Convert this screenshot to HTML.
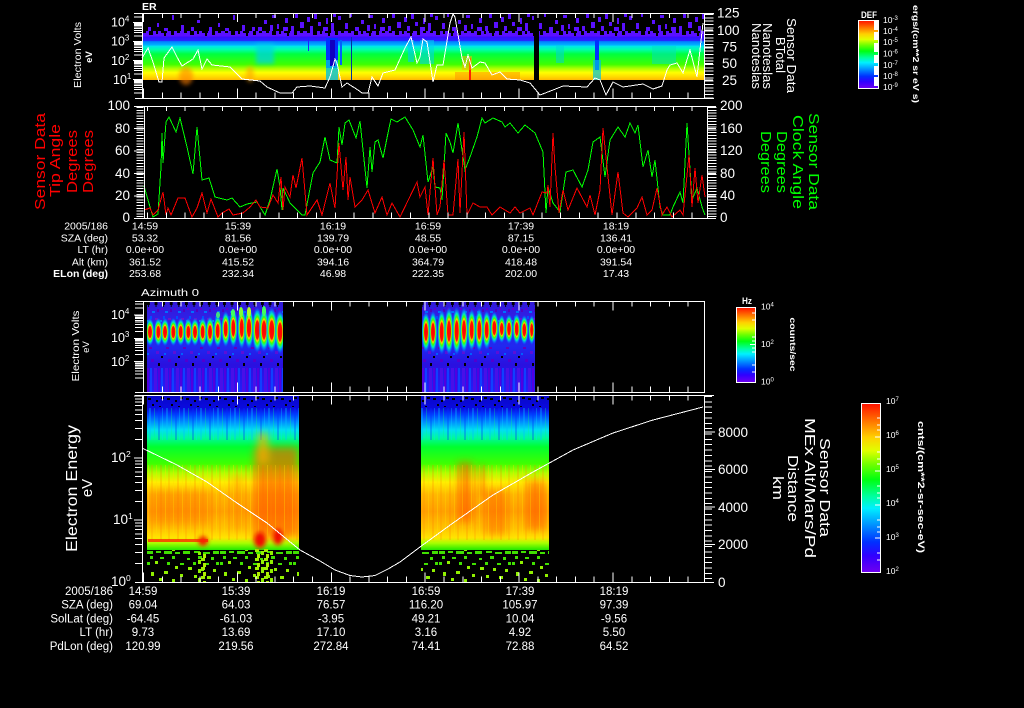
<!DOCTYPE html>
<html><head><meta charset="utf-8"><title>Sensor Data</title>
<style>
html,body{margin:0;padding:0;background:#000;width:1024px;height:708px;overflow:hidden}
svg{display:block}
text{fill:#fff;font-family:"Liberation Sans",sans-serif}
.t2 text{font-size:10.5px;text-anchor:middle}
.t2 text.l,.t4 text.l{text-anchor:end}
.t4 text{font-size:11.5px;text-anchor:middle}
.r text{font-size:13.5px;text-anchor:end}
.rr text{font-size:13.5px}
.red text{fill:#f00;font-size:15px;text-anchor:middle}
.grn text{fill:#0f0;font-size:15px;text-anchor:middle}
.wh text{font-size:15px;text-anchor:middle}
.c text{font-size:8.5px}
.tk{stroke:#fff;fill:none;stroke-width:1}
</style></head><body>
<svg width="1024" height="708" viewBox="0 0 1024 708" shape-rendering="crispEdges">
<defs>
<clipPath id="cp1"><rect x="130" y="13" width="20" height="86"/></clipPath>
<clipPath id="cp3"><rect x="130" y="301" width="20" height="92"/></clipPath>
<clipPath id="cp3b"><rect x="147" y="302" width="136" height="90"/><rect x="422" y="302" width="113" height="90"/></clipPath>
<clipPath id="cp4"><rect x="130" y="395" width="20" height="188"/></clipPath>
<clipPath id="cp4b"><rect x="147" y="396" width="152" height="154"/><rect x="421" y="396" width="128" height="154"/></clipPath>
<linearGradient id="g1" x1="0" y1="0" x2="0" y2="1">
<stop offset="0" stop-color="#3c08ff"/><stop offset=".09" stop-color="#2a20ff"/><stop offset=".11" stop-color="#0080ff"/><stop offset=".19" stop-color="#00b0ff"/><stop offset=".22" stop-color="#00e8e8"/><stop offset=".3" stop-color="#00ffa8"/><stop offset=".4" stop-color="#00ff40"/><stop offset=".64" stop-color="#40ff00"/><stop offset=".73" stop-color="#a8ff00"/><stop offset=".83" stop-color="#ffff00"/><stop offset=".93" stop-color="#ffd800"/><stop offset="1" stop-color="#ffb800"/>
</linearGradient>
<linearGradient id="g4" x1="0" y1="0" x2="0" y2="1">
<stop offset="0" stop-color="#0808c8"/><stop offset=".08" stop-color="#0a0ae0"/><stop offset=".12" stop-color="#0040ff"/><stop offset=".17" stop-color="#0090ff"/><stop offset=".22" stop-color="#00e0f0"/><stop offset=".27" stop-color="#00f8a0"/><stop offset=".33" stop-color="#00ff30"/><stop offset=".44" stop-color="#40ff00"/><stop offset=".5" stop-color="#b0ff00"/><stop offset=".56" stop-color="#ffee00"/><stop offset=".64" stop-color="#ffb800"/><stop offset=".75" stop-color="#ffa000"/><stop offset=".86" stop-color="#ffc400"/><stop offset=".92" stop-color="#ffe400"/><stop offset=".955" stop-color="#a8ff00"/><stop offset="1" stop-color="#20e800"/>
</linearGradient>
<linearGradient id="g3" x1="0" y1="0" x2="0" y2="1">
<stop offset="0" stop-color="#3018d8"/><stop offset=".2" stop-color="#3020e8"/><stop offset=".5" stop-color="#2028f0"/><stop offset=".7" stop-color="#2a10e0"/><stop offset="1" stop-color="#2020f8"/>
</linearGradient>
<linearGradient id="bar" x1="0" y1="0" x2="0" y2="1">
<stop offset="0" stop-color="#ff1000"/><stop offset=".1" stop-color="#ff7000"/><stop offset=".2" stop-color="#ffd000"/><stop offset=".28" stop-color="#e0ff00"/><stop offset=".36" stop-color="#70ff00"/><stop offset=".45" stop-color="#00ff10"/><stop offset=".55" stop-color="#00ffa0"/><stop offset=".62" stop-color="#00f0ff"/><stop offset=".72" stop-color="#0090ff"/><stop offset=".82" stop-color="#0030ff"/><stop offset=".9" stop-color="#3000ff"/><stop offset="1" stop-color="#7000f0"/>
</linearGradient>
<radialGradient id="pl">
<stop offset="0" stop-color="#ff0000"/><stop offset=".38" stop-color="#ff1000"/><stop offset=".47" stop-color="#ffd000"/><stop offset=".57" stop-color="#40ff00"/><stop offset=".7" stop-color="#00e8c0"/><stop offset=".85" stop-color="#0080ff" stop-opacity=".7"/><stop offset="1" stop-color="#2030ff" stop-opacity="0"/>
</radialGradient>
<filter id="b2" x="-50%" y="-50%" width="200%" height="200%"><feGaussianBlur stdDeviation="2"/></filter>
<filter id="b4" x="-50%" y="-50%" width="200%" height="200%"><feGaussianBlur stdDeviation="4"/></filter>
<pattern id="sp1" width="97" height="18" patternUnits="userSpaceOnUse" x="142" y="13">
<g fill="#5a10ff">
<rect x="2" y="3" width="3" height="4"/><rect x="9" y="10" width="3" height="6"/><rect x="14" y="1" width="2" height="3"/><rect x="19" y="14" width="4" height="4"/><rect x="25" y="7" width="3" height="4"/><rect x="31" y="12" width="3" height="6"/><rect x="33" y="2" width="4" height="3"/><rect x="38" y="11" width="2" height="5"/><rect x="44" y="14" width="5" height="4"/><rect x="46" y="5" width="3" height="5"/><rect x="52" y="13" width="3" height="5"/><rect x="56" y="0" width="3" height="5"/><rect x="61" y="9" width="4" height="6"/><rect x="68" y="4" width="3" height="5"/><rect x="71" y="13" width="3" height="5"/><rect x="75" y="1" width="3" height="5"/><rect x="79" y="9" width="3" height="4"/><rect x="84" y="14" width="5" height="4"/><rect x="87" y="5" width="2" height="6"/><rect x="92" y="10" width="3" height="8"/><rect x="94" y="1" width="3" height="3"/>
</g>
</pattern>
<pattern id="sp0" width="61" height="18" patternUnits="userSpaceOnUse" x="142" y="14">
<g fill="#5a10ff">
<rect x="6" y="13" width="3" height="5"/><rect x="15" y="9" width="2" height="4"/><rect x="22" y="14" width="4" height="4"/><rect x="30" y="1" width="2" height="5"/><rect x="39" y="11" width="3" height="7"/><rect x="49" y="13" width="3" height="5"/><rect x="55" y="6" width="3" height="3"/>
</g>
</pattern>
<pattern id="row1" width="41" height="6" patternUnits="userSpaceOnUse" x="142" y="31">
<rect width="41" height="6" fill="#5a10ff"/><rect x="1" y="0" width="3" height="2" fill="#000"/><rect x="7" y="0" width="4" height="4" fill="#000"/><rect x="14" y="0" width="2" height="3" fill="#000"/><rect x="19" y="0" width="6" height="2" fill="#000"/><rect x="22" y="2" width="2" height="3" fill="#000"/><rect x="29" y="0" width="3" height="4" fill="#000"/><rect x="35" y="0" width="3" height="2" fill="#000"/>
</pattern>
<pattern id="sp4" width="73" height="32" patternUnits="userSpaceOnUse" x="147" y="551">
<g fill="#40e000">
<rect x="0" y="0" width="6" height="3"/><rect x="9" y="0" width="5" height="2"/><rect x="17" y="0" width="8" height="3"/><rect x="28" y="1" width="5" height="2"/><rect x="36" y="0" width="7" height="3"/><rect x="47" y="0" width="6" height="2"/><rect x="56" y="1" width="7" height="2"/><rect x="66" y="0" width="6" height="3"/>
<rect x="3" y="5" width="3" height="3"/><rect x="13" y="6" width="4" height="2"/><rect x="25" y="5" width="3" height="3"/><rect x="40" y="7" width="3" height="2"/><rect x="51" y="5" width="4" height="3"/><rect x="64" y="6" width="3" height="3"/>
<rect x="0" y="11" width="3" height="3"/><rect x="20" y="11" width="3" height="3"/><rect x="33" y="12" width="4" height="2"/><rect x="46" y="11" width="3" height="3"/><rect x="58" y="12" width="4" height="2"/><rect x="69" y="11" width="3" height="3"/>
</g>
<g fill="#90f000">
<rect x="8" y="10" width="3" height="3"/><rect x="28" y="15" width="3" height="3"/><rect x="41" y="16" width="4" height="3"/><rect x="54" y="17" width="3" height="3"/><rect x="66" y="18" width="3" height="3"/><rect x="4" y="21" width="3" height="4"/><rect x="17" y="20" width="4" height="3"/><rect x="33" y="23" width="3" height="3"/><rect x="47" y="24" width="3" height="3"/><rect x="60" y="25" width="4" height="3"/><rect x="12" y="27" width="3" height="3"/><rect x="25" y="28" width="3" height="4"/>
</g>
</pattern>
<pattern id="hot" width="9" height="9" patternUnits="userSpaceOnUse" x="255" y="549">
<rect x="0" y="0" width="4" height="3" fill="#a0f000"/><rect x="6" y="2" width="3" height="4" fill="#90f000"/><rect x="2" y="5" width="3" height="4" fill="#b0f000"/>
</pattern>
<pattern id="st3" width="11" height="24" patternUnits="userSpaceOnUse" x="147" y="368">
<rect x="0" y="0" width="2" height="24" fill="#5000e0"/><rect x="3" y="0" width="2" height="24" fill="#1040ff"/><rect x="7" y="0" width="3" height="24" fill="#4810e8"/>
</pattern>
<pattern id="nt3" width="7.6" height="5" patternUnits="userSpaceOnUse" x="147" y="302">
<rect x="0" y="0" width="3" height="3" fill="#000"/><rect x="1" y="3" width="1" height="2" fill="#000"/>
</pattern>
<pattern id="sk3" width="17" height="22" patternUnits="userSpaceOnUse" x="147" y="345">
<rect x="2" y="2" width="3" height="2" fill="#6000c0"/><rect x="9" y="6" width="3" height="3" fill="#5a10d8"/><rect x="14" y="11" width="2" height="2" fill="#000"/><rect x="4" y="14" width="3" height="3" fill="#5000d0"/><rect x="11" y="18" width="2" height="3" fill="#000"/><rect x="0" y="8" width="2" height="2" fill="#0060ff"/>
</pattern>
<pattern id="sk3t" width="13" height="16" patternUnits="userSpaceOnUse" x="147" y="307">
<rect x="1" y="1" width="2" height="2" fill="#6000d0"/><rect x="5" y="4" width="3" height="2" fill="#0070ff"/><rect x="10" y="2" width="2" height="3" fill="#5000c0"/><rect x="3" y="9" width="2" height="3" fill="#0050ff"/><rect x="8" y="11" width="3" height="2" fill="#7010d0"/><rect x="0" y="13" width="2" height="2" fill="#0090f0"/>
</pattern>
<pattern id="sp4t" width="19" height="12" patternUnits="userSpaceOnUse" x="147" y="397">
<rect x="1" y="1" width="3" height="2" fill="#000"/><rect x="9" y="3" width="2" height="2" fill="#000"/><rect x="14" y="0" width="3" height="2" fill="#000"/><rect x="5" y="7" width="2" height="2" fill="#000"/><rect x="12" y="9" width="2" height="1" fill="#000"/>
</pattern>
<pattern id="stk" width="17" height="80" patternUnits="userSpaceOnUse" x="147" y="465">
<rect x="1" width="1" height="80" fill="#ffe000" opacity=".35"/><rect x="4" width="2" height="80" fill="#ff8000" opacity=".2"/><rect x="9" width="1" height="80" fill="#ffe000" opacity=".3"/><rect x="13" width="2" height="80" fill="#ff7000" opacity=".2"/>
</pattern>
<pattern id="stb" width="17" height="40" patternUnits="userSpaceOnUse" x="147" y="406">
<rect x="2" width="2" height="40" fill="#00c0ff" opacity=".35"/><rect x="7" width="1" height="40" fill="#00ff80" opacity=".3"/><rect x="11" width="2" height="40" fill="#0030ff" opacity=".3"/><rect x="15" width="1" height="40" fill="#00e0ff" opacity=".3"/>
</pattern>
<path id="dec" vector-effect="non-scaling-stroke" d="M0 -30.1h8M0 -47.7h8M0 -60.2h8M0 -69.9h8M0 -77.8h8M0 -84.5h8M0 -90.3h8M0 -95.4h8M-1 -100h9"/>
<ellipse id="p" rx="4.5" ry="16" fill="url(#pl)"/>
</defs>

<rect width="1024" height="708" fill="#000"/>

<!-- PANEL 1 -->
<rect x="142" y="14" width="562" height="17" fill="url(#sp1)"/>
<rect x="142" y="14" width="113" height="17" fill="#000"/>
<rect x="142" y="14" width="113" height="17" fill="url(#sp0)"/>
<rect x="142" y="31" width="562" height="6" fill="url(#row1)"/>
<rect x="142" y="36.7" width="562" height="43.3" fill="url(#g1)"/>
<ellipse cx="186" cy="76" rx="7" ry="9" fill="#ff8000" opacity=".6" filter="url(#b2)"/>
<ellipse cx="250" cy="74" rx="4" ry="8" fill="#ffa000" opacity=".6" filter="url(#b2)"/>
<rect x="256" y="44" width="18" height="20" fill="#00d0e8" opacity=".7" filter="url(#b2)"/>
<rect x="326" y="38" width="12" height="30" fill="#0030ff"/>
<rect x="326" y="60" width="12" height="20" fill="#00c0e0" opacity=".8"/>
<rect x="330" y="40" width="5" height="26" fill="#1000c0"/>
<rect x="308" y="37" width="1" height="14" fill="#2020ff"/>
<rect x="351" y="37" width="1" height="43" fill="#0030a0"/>
<rect x="340" y="40" width="2" height="25" fill="#0060ff"/>
<rect x="408" y="40" width="6" height="22" fill="#00c8f0" opacity=".6"/>
<rect x="420" y="40" width="14" height="24" fill="#00d0f0" opacity=".55"/>
<rect x="455" y="72" width="65" height="8" fill="#ff9000" opacity=".5"/>
<rect x="469" y="58" width="2" height="22" fill="#ff2000"/>
<rect x="462" y="56" width="10" height="14" fill="#ffb000" opacity=".5"/>
<rect x="595" y="40" width="4" height="30" fill="#0030ff"/>
<rect x="593" y="60" width="8" height="20" fill="#00c0e0" opacity=".7"/>
<rect x="556" y="45" width="8" height="18" fill="#00d0e0" opacity=".5"/>
<rect x="652" y="46" width="24" height="18" fill="#00e0c0" opacity=".5"/>
<rect x="534" y="14" width="5" height="66" fill="#000"/>
<polyline fill="none" stroke="#fff" stroke-width="1" points="142,58 148,48 153,62 159,82 162,82 164,58 172,47 177,57 182,66 193,59 198,50 202,69 207,59 212,65 230,67 242,79 260,81 267,87 280,93 292,93 297,87 310,86 325,88 330,77 335,59 337,63 342,87 347,83 358,90 362,93 368,93 372,77 378,86 383,73 395,70 405,48 411,37 417,63 420,57 423,39 427,42 433,82 437,65 443,65 450,23 453,14 455,17 462,58 465,67 468,55 472,68 480,62 485,63 492,75 500,72 507,79 520,80 530,83 540,95 553,90 563,86 587,87 595,78 600,80 606,95 613,82 623,87 643,84 653,89 662,86 667,70 670,65 677,63 683,73 690,50 697,77 703,23"/>
<g class="tk">
<path d="M135 13.5H714M142.5 14V98M704.5 14V98M135 98.5H714"/>
<line x1="143" y1="15.5" x2="704" y2="15.5" stroke-width="5" stroke-dasharray="1 17.78"/>
<line x1="143" y1="17.5" x2="704" y2="17.5" stroke-width="9" stroke-dasharray="1 92.9"/>
<line x1="143" y1="95.5" x2="704" y2="95.5" stroke-width="6" stroke-dasharray="1 17.78"/>
<line x1="143" y1="93.5" x2="704" y2="93.5" stroke-width="10" stroke-dasharray="1 92.9"/>
<g clip-path="url(#cp1)">
<use href="#dec" transform="translate(134,79.7) scale(1,.19)"/>
<use href="#dec" transform="translate(134,60.7) scale(1,.19)"/>
<use href="#dec" transform="translate(134,41.7) scale(1,.19)"/>
<use href="#dec" transform="translate(134,22.7) scale(1,.19)"/>
<use href="#dec" transform="translate(134,98.7) scale(1,.19)"/>
</g>
<line x1="709" y1="14" x2="709" y2="98" stroke-width="9" stroke-dasharray="1 2.33"/>
<path d="M704 30H713M704 47H713M704 63.5H713M704 80H713"/>
</g>
<text x="142" y="10" font-size="10.5" font-weight="bold">ER</text>
<g font-size="12.5">
<text x="111" y="26.5">10<tspan font-size="8" dy="-5">4</tspan></text>
<text x="111" y="45.5">10<tspan font-size="8" dy="-5">3</tspan></text>
<text x="111" y="65">10<tspan font-size="8" dy="-5">2</tspan></text>
<text x="113" y="84">10<tspan font-size="8" dy="-5">1</tspan></text>
</g>
<text transform="translate(81,55) rotate(-90)" font-size="10" text-anchor="middle" textLength="66" lengthAdjust="spacingAndGlyphs">Electron Volts</text>
<text transform="translate(92,57) rotate(-90)" font-size="9.5" text-anchor="middle" font-weight="bold">eV</text>
<g class="rr">
<text x="717" y="17.5" font-size="13">125</text>
<text x="717" y="35" font-size="13">100</text>
<text x="722" y="51.5" font-size="13">75</text>
<text x="722" y="68" font-size="13">50</text>
<text x="722" y="85" font-size="13">25</text>
</g>
<g class="wh">
<text transform="translate(787,55.5) rotate(90)" style="font-size:12.5px" textLength="75" lengthAdjust="spacingAndGlyphs">Sensor Data</text>
<text transform="translate(776,55) rotate(90)" style="font-size:12.5px" textLength="36" lengthAdjust="spacingAndGlyphs">BTotal</text>
<text transform="translate(763,56) rotate(90)" style="font-size:12.5px" textLength="66" lengthAdjust="spacingAndGlyphs">Nanoteslas</text>
<text transform="translate(752,56) rotate(90)" style="font-size:12.5px" textLength="66" lengthAdjust="spacingAndGlyphs">Nanoteslas</text>
</g>

<!-- Colorbar 1 -->
<rect x="858.5" y="20.5" width="20" height="68" fill="url(#bar)" stroke="#fff"/>
<rect x="874" y="21" width="4" height="9" fill="#fff"/><rect x="874" y="32" width="4" height="8" fill="#fff"/><rect x="874" y="43" width="4" height="9" fill="#fff"/><rect x="874" y="55" width="4" height="8" fill="#fff"/><rect x="874" y="66" width="4" height="9" fill="#fff"/><rect x="874" y="77" width="4" height="9" fill="#fff"/>
<text x="861" y="18" font-size="9.5" font-weight="bold" textLength="16" lengthAdjust="spacingAndGlyphs">DEF</text>
<g class="c">
<text x="883" y="23">10<tspan font-size="6" dy="-3">-3</tspan></text>
<text x="883" y="34">10<tspan font-size="6" dy="-3">-4</tspan></text>
<text x="883" y="45">10<tspan font-size="6" dy="-3">-5</tspan></text>
<text x="883" y="56.5">10<tspan font-size="6" dy="-3">-6</tspan></text>
<text x="883" y="68">10<tspan font-size="6" dy="-3">-7</tspan></text>
<text x="883" y="79">10<tspan font-size="6" dy="-3">-8</tspan></text>
<text x="883" y="90">10<tspan font-size="6" dy="-3">-9</tspan></text>
</g>
<text transform="translate(913,54) rotate(90)" font-size="8.5" font-weight="bold" text-anchor="middle" textLength="98" lengthAdjust="spacingAndGlyphs">ergs/(cm**2 sr eV s)</text>

<!-- PANEL 2 -->
<polyline fill="none" stroke="#0f0" points="144,186 148,200 153,217 158,214 161,167 162,133 163,163 166,122 169,117 176,132 180,118 187,147 193,174 197,127 202,180 209,178 215,197 227,200 232,198 240,207 247,204 257,202 265,215 270,200 277,169 280,187 282,210 283,188 290,203 302,215 305,215 313,173 320,162 325,137 330,160 337,163 339,127 342,145 345,123 349,120 356,138 360,121 367,188 370,147 372,172 375,142 378,140 383,158 388,133 391,119 397,122 405,117 413,130 420,147 423,135 428,182 433,167 435,187 440,188 442,200 446,133 450,142 453,153 458,123 465,170 470,157 477,137 482,118 485,123 493,118 502,122 505,127 510,123 518,133 525,125 535,133 543,152 546,213 548,187 553,203 560,212 566,172 573,170 582,187 588,170 593,142 600,137 605,177 610,140 618,127 625,137 630,123 635,133 638,125 643,167 648,150 652,177 655,160 660,207 663,215 670,215 673,207 680,192 683,203 687,123 692,200 697,188 702,207 705,215"/>
<polyline fill="none" stroke="#f00" points="144,210 150,208 153,215 158,210 163,192 166,215 168,208 171,215 178,198 185,198 192,217 197,208 202,193 207,213 211,199 218,217 222,213 229,209 233,215 243,213 250,207 256,200 260,207 268,208 273,195 278,203 281,177 283,210 285,187 290,197 293,175 296,188 302,158 307,215 317,200 322,215 330,183 335,208 339,143 343,190 346,157 348,200 350,177 355,207 362,200 368,190 375,213 382,197 387,215 392,203 400,217 417,182 420,197 425,187 428,215 433,158 437,215 440,207 444,160 448,215 453,215 458,159 460,213 464,132 467,215 473,203 480,207 487,207 492,215 500,207 510,213 515,207 520,213 530,208 533,215 542,192 547,193 548,185 550,207 553,133 555,167 559,213 563,190 568,210 577,188 587,207 590,195 595,215 600,190 603,128 607,167 612,215 618,172 623,213 628,217 637,208 642,197 647,215 652,210 657,188 662,215 667,207 672,217 680,210 683,215 689,155 692,207 695,168 698,203 702,175 705,197"/>
<g class="tk">
<path d="M134 106.5H716M144.5 106V218M707.5 106V218M134 218.5H716"/>
<line x1="147" y1="108.5" x2="707" y2="108.5" stroke-width="5" stroke-dasharray="1 17.78"/>
<line x1="147" y1="215.5" x2="707" y2="215.5" stroke-width="6" stroke-dasharray="1 17.78"/>
<line x1="140" y1="107" x2="140" y2="218" stroke-width="7" stroke-dasharray="1 1.8"/>
<line x1="712" y1="107" x2="712" y2="218" stroke-width="9" stroke-dasharray="1 1.8"/>
<path d="M134 128.5H144M134 151H144M134 173.5H144M134 196H144M707 128.5H716M707 151H716M707 173.5H716M707 196H716"/>
</g>
<g class="r">
<text x="130" y="110">100</text><text x="130" y="133">80</text><text x="130" y="155">60</text><text x="130" y="178">40</text><text x="130" y="200">20</text><text x="130" y="222">0</text>
</g>
<g class="rr">
<text x="720" y="110">200</text><text x="720" y="133">160</text><text x="720" y="155">120</text><text x="720" y="178">80</text><text x="720" y="200">40</text><text x="720" y="222">0</text>
</g>
<g class="red">
<text transform="translate(45,161.5) rotate(-90)" textLength="97" lengthAdjust="spacingAndGlyphs">Sensor Data</text>
<text transform="translate(60,160.5) rotate(-90)" textLength="73" lengthAdjust="spacingAndGlyphs">Tip Angle</text>
<text transform="translate(77,161.5) rotate(-90)" textLength="63" lengthAdjust="spacingAndGlyphs">Degrees</text>
<text transform="translate(93,161.5) rotate(-90)" textLength="63" lengthAdjust="spacingAndGlyphs">Degrees</text>
</g>
<g class="grn">
<text transform="translate(809,161.5) rotate(90)" textLength="97" lengthAdjust="spacingAndGlyphs">Sensor Data</text>
<text transform="translate(793,162) rotate(90)" textLength="94" lengthAdjust="spacingAndGlyphs">Clock Angle</text>
<text transform="translate(777,162) rotate(90)" textLength="62" lengthAdjust="spacingAndGlyphs">Degrees</text>
<text transform="translate(761,162) rotate(90)" textLength="62" lengthAdjust="spacingAndGlyphs">Degrees</text>
</g>
<g class="t2">
<text class="l" x="108" y="229.5">2005/186</text><text x="145" y="229.5">14:59</text><text x="238" y="229.5">15:39</text><text x="333" y="229.5">16:19</text><text x="428" y="229.5">16:59</text><text x="521" y="229.5">17:39</text><text x="616" y="229.5">18:19</text>
<text class="l" x="108" y="241.5">SZA (deg)</text><text x="145" y="241.5">53.32</text><text x="238" y="241.5">81.56</text><text x="333" y="241.5">139.79</text><text x="428" y="241.5">48.55</text><text x="521" y="241.5">87.15</text><text x="616" y="241.5">136.41</text>
<text class="l" x="108" y="253">LT (hr)</text><text x="145" y="253">0.0e+00</text><text x="238" y="253">0.0e+00</text><text x="333" y="253">0.0e+00</text><text x="428" y="253">0.0e+00</text><text x="521" y="253">0.0e+00</text><text x="616" y="253">0.0e+00</text>
<text class="l" x="108" y="265.5">Alt (km)</text><text x="145" y="265.5">361.52</text><text x="238" y="265.5">415.52</text><text x="333" y="265.5">394.16</text><text x="428" y="265.5">364.79</text><text x="521" y="265.5">418.48</text><text x="616" y="265.5">391.54</text>
<text class="l" x="108" y="277" font-weight="bold">ELon (deg)</text><text x="145" y="277">253.68</text><text x="238" y="277">232.34</text><text x="333" y="277">46.98</text><text x="428" y="277">222.35</text><text x="521" y="277">202.00</text><text x="616" y="277">17.43</text>
</g>

<!-- PANEL 3 -->
<text x="141" y="296" font-size="10.5" textLength="58" lengthAdjust="spacingAndGlyphs">Azimuth 0</text>
<g clip-path="url(#cp3b)">
<rect x="147" y="302" width="136" height="90" fill="url(#g3)"/>
<rect x="422" y="302" width="113" height="90" fill="url(#g3)"/>
<rect x="147" y="307" width="388" height="16" fill="url(#sk3t)"/>
<rect x="147" y="302" width="388" height="5" fill="url(#nt3)"/>
<rect x="147" y="345" width="388" height="22" fill="url(#sk3)"/>
<rect x="147" y="368" width="388" height="24" fill="url(#st3)"/>
<use href="#p" transform="translate(150,332) scale(1,.9)"/><use href="#p" transform="translate(158.3,332) scale(1,.9)"/><use href="#p" transform="translate(165,332) scale(1,.9)"/><use href="#p" transform="translate(173.3,332) scale(1,.9)"/><use href="#p" transform="translate(180.7,332) scale(1,.9)"/><use href="#p" transform="translate(188.3,332) scale(1,.9)"/><use href="#p" transform="translate(195,332) scale(1,.9)"/><use href="#p" transform="translate(202.7,332) scale(1,.95)"/><use href="#p" transform="translate(210,332) scale(1,1)"/><use href="#p" transform="translate(217.7,331) scale(1,1.05)"/><use href="#p" transform="translate(225.7,329) scale(1,1.15)"/><use href="#p" transform="translate(233.3,328) scale(1,1.25)"/><use href="#p" transform="translate(241.7,328) scale(1,1.35)"/><use href="#p" transform="translate(249,328) scale(1.1,1.35)"/><use href="#p" transform="translate(257.3,330) scale(1.2,1.45)"/><use href="#p" transform="translate(264,330) scale(1.2,1.4)"/><use href="#p" transform="translate(271.7,330) scale(1.3,1.45)"/><use href="#p" transform="translate(280,332) scale(1.2,1.4)"/>
<ellipse cx="233" cy="313" rx="2" ry="4" fill="#40ff60"/><ellipse cx="241" cy="312" rx="2" ry="5" fill="#80ff30"/><ellipse cx="249" cy="312" rx="2" ry="5" fill="#b0ff20"/><ellipse cx="264" cy="311" rx="2" ry="5" fill="#40ff60"/><ellipse cx="218" cy="315" rx="2" ry="3" fill="#40e080"/>
<use href="#p" transform="translate(426,332) scale(1,1.3)"/><use href="#p" transform="translate(433,332) scale(1,1.35)"/><use href="#p" transform="translate(441.7,332) scale(1,1.45)"/><use href="#p" transform="translate(449,331) scale(1.05,1.55)"/><use href="#p" transform="translate(456.7,331) scale(1.05,1.55)"/><use href="#p" transform="translate(464,330) scale(1,1.45)"/><use href="#p" transform="translate(471.7,330) scale(1,1.35)"/><use href="#p" transform="translate(479.3,330) scale(1,1.4)"/><use href="#p" transform="translate(486.7,330) scale(1,1.25)"/><use href="#p" transform="translate(494.3,328) scale(1,1.05)"/><use href="#p" transform="translate(501.7,329) scale(.9,.9)"/><use href="#p" transform="translate(509,329) scale(.95,.95)"/><use href="#p" transform="translate(516.7,329) scale(.95,1)"/><use href="#p" transform="translate(524.3,330) scale(.95,.95)"/><use href="#p" transform="translate(531.7,330) scale(.8,.95)"/>
</g>
<g class="tk">
<path d="M135 301.5H704.5V392.5H135M143.5 301V392"/>
<line x1="143" y1="304" x2="704" y2="304" stroke-width="5" stroke-dasharray="1 17.78"/>
<line x1="143" y1="306" x2="704" y2="306" stroke-width="9" stroke-dasharray="1 92.9"/>
<line x1="143" y1="389.5" x2="704" y2="389.5" stroke-width="6" stroke-dasharray="1 17.78"/>
<line x1="143" y1="387.5" x2="704" y2="387.5" stroke-width="10" stroke-dasharray="1 92.9"/>
<g clip-path="url(#cp3)">
<use href="#dec" transform="translate(135,361.7) scale(1,.233)"/>
<use href="#dec" transform="translate(135,338.4) scale(1,.233)"/>
<use href="#dec" transform="translate(135,315.1) scale(1,.233)"/>
<use href="#dec" transform="translate(135,385) scale(1,.233)"/>
</g>
</g>
<g font-size="12.5">
<text x="111" y="319">10<tspan font-size="8" dy="-5">4</tspan></text>
<text x="111" y="342">10<tspan font-size="8" dy="-5">3</tspan></text>
<text x="111" y="366">10<tspan font-size="8" dy="-5">2</tspan></text>
</g>
<text transform="translate(79,346) rotate(-90)" font-size="10" text-anchor="middle" textLength="71" lengthAdjust="spacingAndGlyphs">Electron Volts</text>
<text transform="translate(89,347) rotate(-90)" font-size="9.5" text-anchor="middle">eV</text>

<!-- Colorbar 2 -->
<rect x="736.5" y="307.5" width="19" height="75" fill="url(#bar)" stroke="#fff"/>
<text x="742" y="304" font-size="9.5" font-weight="bold" textLength="10" lengthAdjust="spacingAndGlyphs">Hz</text>
<path d="M750 344.5h6M752 341h4M752 337h4M752 348h4M752 352h4M752 320h4M752 313h4M752 372h4M752 365h4" stroke="#fff" fill="none"/>
<g class="c">
<text x="761" y="309.5">10<tspan font-size="6" dy="-3">4</tspan></text>
<text x="761" y="347">10<tspan font-size="6" dy="-3">2</tspan></text>
<text x="761" y="384.5">10<tspan font-size="6" dy="-3">0</tspan></text>
</g>
<text transform="translate(790,344.5) rotate(90)" font-size="8.5" font-weight="bold" text-anchor="middle" textLength="54" lengthAdjust="spacingAndGlyphs">counts/sec</text>

<!-- PANEL 4 -->
<rect x="147" y="396" width="152" height="154" fill="url(#g4)"/>
<rect x="421" y="396" width="128" height="154" fill="url(#g4)"/>
<rect x="147" y="397" width="402" height="11" fill="url(#sp4t)" clip-path="url(#cp4b)"/>
<rect x="147" y="408" width="402" height="32" fill="url(#stb)" clip-path="url(#cp4b)"/>
<rect x="147" y="550" width="152" height="32" fill="url(#sp4)"/>
<rect x="421" y="550" width="128" height="32" fill="url(#sp4)"/>
<rect x="255" y="549" width="18" height="33" fill="url(#hot)"/>
<rect x="197" y="552" width="10" height="30" fill="url(#hot)"/>
<g clip-path="url(#cp4b)">
<g filter="url(#b4)">
<rect x="254" y="447" width="44" height="90" fill="#ff5000" opacity=".6"/>
<rect x="258" y="433" width="10" height="30" fill="#ffb000" opacity=".7"/>
<rect x="232" y="475" width="12" height="55" fill="#ff7000" opacity=".3"/>
<rect x="150" y="490" width="60" height="35" fill="#ff6000" opacity=".3"/>
<rect x="458" y="462" width="14" height="60" fill="#ff4000" opacity=".5"/>
<rect x="485" y="490" width="22" height="45" fill="#ff5000" opacity=".4"/>
<rect x="526" y="480" width="20" height="50" fill="#ff4000" opacity=".45"/>
<rect x="480" y="466" width="3" height="30" fill="#ff3000" opacity=".8"/>
</g>
<rect x="147" y="465" width="402" height="75" fill="url(#stk)"/>
<g filter="url(#b2)">
<ellipse cx="260" cy="540" rx="6" ry="8" fill="#f01000"/>
<ellipse cx="278" cy="537" rx="5" ry="8" fill="#f01000"/>
<ellipse cx="203" cy="541" rx="5" ry="5" fill="#f02000"/>
</g>
<rect x="148" y="539" width="60" height="3" fill="#ff2000" opacity=".75"/>
</g>
<polyline fill="none" stroke="#fff" points="142,448 177,465 207,482 237,503 267,523 300,550 320,561 335,570 350,575.5 362,577 375,575.5 388,569 400,562 420,547 453,523 493,495 533,472 573,450 613,433 653,420 703,407"/>
<g class="tk">
<path d="M135 395.5H714M142.5 395V582M704.5 395V582M135 582.5H714"/>
<line x1="143" y1="398" x2="704" y2="398" stroke-width="5" stroke-dasharray="1 17.78"/>
<line x1="143" y1="400" x2="704" y2="400" stroke-width="9" stroke-dasharray="1 92.9"/>
<line x1="143" y1="579.5" x2="704" y2="579.5" stroke-width="6" stroke-dasharray="1 17.78"/>
<line x1="143" y1="577.5" x2="704" y2="577.5" stroke-width="10" stroke-dasharray="1 92.9"/>
<g clip-path="url(#cp4)">
<use href="#dec" transform="translate(135,582) scale(1,.62)"/>
<use href="#dec" transform="translate(135,520) scale(1,.62)"/>
<use href="#dec" transform="translate(135,458) scale(1,.62)"/>
</g>
<line x1="708.5" y1="396" x2="708.5" y2="582" stroke-width="7" stroke-dasharray="1 4.36"/>
<path d="M704 432H715M704 469.5H715M704 507H715M704 544.5H715"/>
</g>
<g font-size="13.5">
<text x="111" y="462">10<tspan font-size="8.5" dy="-5">2</tspan></text>
<text x="113" y="524">10<tspan font-size="8.5" dy="-5">1</tspan></text>
<text x="111" y="586">10<tspan font-size="8.5" dy="-5">0</tspan></text>
</g>
<g class="wh">
<text transform="translate(77,488.5) rotate(-90)" style="font-size:16px" textLength="127" lengthAdjust="spacingAndGlyphs">Electron Energy</text>
<text transform="translate(92,488) rotate(-90)" style="font-size:15px">eV</text>
<text transform="translate(820,487.5) rotate(90)" textLength="99" lengthAdjust="spacingAndGlyphs">Sensor Data</text>
<text transform="translate(805,488) rotate(90)" textLength="140" lengthAdjust="spacingAndGlyphs">MEx Alt/Mars/Pd</text>
<text transform="translate(788,488.5) rotate(90)" textLength="67" lengthAdjust="spacingAndGlyphs">Distance</text>
<text transform="translate(773,488) rotate(90)" textLength="24" lengthAdjust="spacingAndGlyphs">km</text>
</g>
<g class="rr">
<text x="718" y="437">8000</text><text x="718" y="474">6000</text><text x="718" y="512">4000</text><text x="718" y="549">2000</text><text x="718" y="587">0</text>
</g>

<!-- Colorbar 3 -->
<rect x="861.5" y="403.5" width="19" height="169" fill="url(#bar)" stroke="#fff"/>
<path d="M875 437h6M875 471h6M875 505h6M875 538h6M877 418h4M877 425h4M877 430h4M877 452h4M877 459h4M877 464h4M877 486h4M877 493h4M877 498h4M877 520h4M877 527h4M877 532h4M877 553h4M877 560h4" stroke="#fff" fill="none"/>
<g class="c">
<text x="886" y="404">10<tspan font-size="6" dy="-3">7</tspan></text>
<text x="886" y="438">10<tspan font-size="6" dy="-3">6</tspan></text>
<text x="886" y="472">10<tspan font-size="6" dy="-3">5</tspan></text>
<text x="886" y="506">10<tspan font-size="6" dy="-3">4</tspan></text>
<text x="886" y="540">10<tspan font-size="6" dy="-3">3</tspan></text>
<text x="886" y="574">10<tspan font-size="6" dy="-3">2</tspan></text>
</g>
<text transform="translate(918,487) rotate(90)" font-size="9" font-weight="bold" text-anchor="middle" textLength="132" lengthAdjust="spacingAndGlyphs">cnts/(cm**2-sr-sec-eV)</text>

<!-- Table 4 -->
<g class="t4">
<text class="l" x="113" y="595">2005/186</text><text x="143" y="595">14:59</text><text x="236" y="595">15:39</text><text x="331" y="595">16:19</text><text x="426" y="595">16:59</text><text x="520" y="595">17:39</text><text x="614" y="595">18:19</text>
<text class="l" x="113" y="608.5">SZA (deg)</text><text x="143" y="608.5">69.04</text><text x="236" y="608.5">64.03</text><text x="331" y="608.5">76.57</text><text x="426" y="608.5">116.20</text><text x="520" y="608.5">105.97</text><text x="614" y="608.5">97.39</text>
<text class="l" x="113" y="622.5">SolLat (deg)</text><text x="143" y="622.5">-64.45</text><text x="236" y="622.5">-61.03</text><text x="331" y="622.5">-3.95</text><text x="426" y="622.5">49.21</text><text x="520" y="622.5">10.04</text><text x="614" y="622.5">-9.56</text>
<text class="l" x="113" y="636">LT (hr)</text><text x="143" y="636">9.73</text><text x="236" y="636">13.69</text><text x="331" y="636">17.10</text><text x="426" y="636">3.16</text><text x="520" y="636">4.92</text><text x="614" y="636">5.50</text>
<text class="l" x="113" y="650">PdLon (deg)</text><text x="143" y="650">120.99</text><text x="236" y="650">219.56</text><text x="331" y="650">272.84</text><text x="426" y="650">74.41</text><text x="520" y="650">72.88</text><text x="614" y="650">64.52</text>
</g>
</svg>
</body></html>
